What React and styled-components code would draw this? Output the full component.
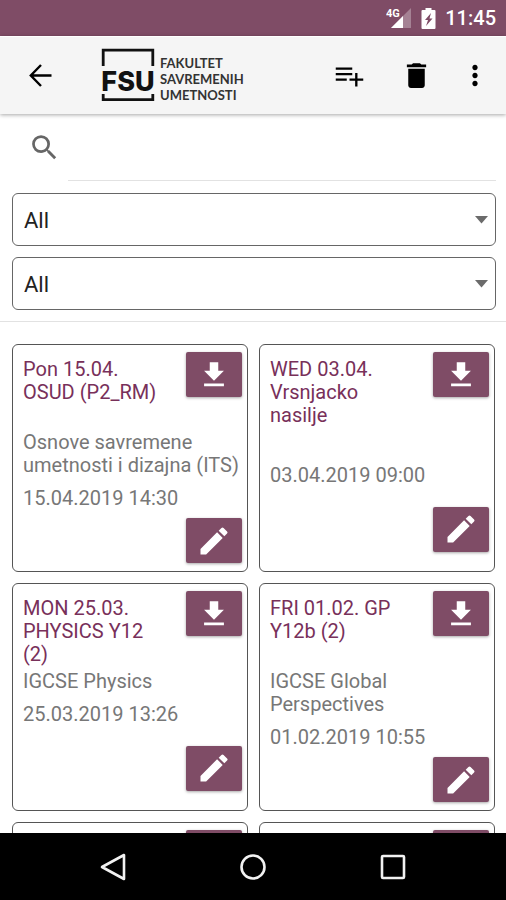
import React, { useState } from "react";
import styled, { createGlobalStyle } from "styled-components";
import { MdDelete, MdEdit, MdGetApp, MdMoreVert, MdSearch } from "react-icons/md";

const GlobalStyle = createGlobalStyle`
  * {
    box-sizing: border-box;
  }

  body {
    margin: 0;
    background: #fff;
    font-family: Roboto, sans-serif;
  }

  button, input, select {
    font-family: inherit;
  }
`;

const Screen = styled.div`
  display: flex;
  flex-direction: column;
  height: 100vh;
  overflow: hidden;
`;

const StatusBar = styled.div`
  flex: none;
  display: flex;
  justify-content: flex-end;
  align-items: center;
  gap: 9px;
  height: 36px;
  padding-right: 10px;
  background: #7f4c66;
  color: #fff;
`;

const Clock = styled.span`
  font-size: 20px;
  font-weight: 500;
  line-height: 24px;
`;

const Toolbar = styled.header`
  flex: none;
  display: flex;
  align-items: center;
  height: 78px;
  padding: 0 15px 0 16px;
  background: #f5f5f5;
  box-shadow: inset 0 1px 0 #fff, 0 1px 4px rgba(0, 0, 0, 0.35);
`;

const IconButton = styled.button`
  display: flex;
  align-items: center;
  justify-content: center;
  width: ${props => (props.$narrow ? "32px" : "48px")};
  height: 48px;
  padding: 0;
  border: none;
  background: none;
  color: #000;
  cursor: pointer;
`;

const Logo = styled.div`
  display: flex;
  align-items: center;
  gap: 5px;
  margin-left: 37px;
`;

const LogoName = styled.div`
  padding-top: 8px;
  color: #333;
  font-family: Lato, sans-serif;
  font-size: 13px;
  font-weight: 700;
  line-height: 16px;
`;

const Actions = styled.div`
  display: flex;
  gap: 19px;
  margin-left: auto;
`;

const SearchRow = styled.div`
  flex: none;
  display: flex;
  align-items: center;
  height: 67px;
  padding: 0 10px 0 28px;
  color: #666;
`;

const SearchInput = styled.input`
  flex: 1;
  min-width: 0;
  height: 67px;
  margin-left: 7px;
  border: none;
  border-bottom: 1px solid #e2e2e2;
  outline: none;
  background: none;
  font-size: 22px;
`;

const Filters = styled.div`
  flex: none;
  display: flex;
  flex-direction: column;
  gap: 11px;
  padding: 12px 10px 11px 12px;
  border-bottom: 1px solid #e2e2e2;
`;

const SelectBox = styled.div`
  display: grid;
  align-items: center;
  height: 53px;
  border: 1px solid #666;
  border-radius: 6px;

  > * {
    grid-area: 1 / 1;
  }

  svg {
    justify-self: end;
    margin-right: 7px;
    pointer-events: none;
  }
`;

const Select = styled.select`
  appearance: none;
  width: 100%;
  height: 51px;
  padding: 2px 30px 0 11px;
  border: none;
  outline: none;
  background: none;
  color: #222;
  font-size: 22px;
`;

const List = styled.main`
  flex: 1;
  min-height: 0;
  overflow: hidden;
  display: grid;
  grid-template-columns: 1fr 1fr;
  grid-auto-rows: min-content;
  gap: 11px;
  padding: 22px 11px 0 12px;
`;

const Card = styled.article`
  display: flex;
  flex-direction: column;
  min-height: 228px;
  padding: 7px 5px 0 10px;
  border: 1px solid #555;
  border-radius: 6px;
  font-size: 20px;
  line-height: 23px;
  color: #777;
`;

const CardHead = styled.div`
  display: flex;
  align-items: flex-start;
  justify-content: space-between;
  gap: 24px;
`;

const Title = styled.h2`
  flex: 1;
  min-width: 0;
  min-height: 69px;
  margin: 6px 0 4px;
  color: #78305a;
  font-size: 20px;
  font-weight: 400;
  line-height: 23px;
`;

const Subject = styled.div`
  min-height: 23px;
`;

const Time = styled.div`
  min-height: 23px;
  margin-top: 10px;
`;

const CardFoot = styled.div`
  flex: 1;
  display: flex;
  align-items: center;
  justify-content: flex-end;
`;

const CardButton = styled.button`
  flex: none;
  display: flex;
  align-items: center;
  justify-content: center;
  width: 56px;
  height: 45px;
  padding: 0;
  border: none;
  border-radius: 2px;
  background: #7f4c66;
  color: #fff;
  box-shadow: 0 1px 3px rgba(0, 0, 0, 0.35);
  cursor: pointer;
`;

const NavBar = styled.nav`
  flex: none;
  display: flex;
  align-items: center;
  justify-content: space-around;
  height: 67px;
  padding: 0 43px;
  background: #000;
`;

const NavButton = styled(IconButton)`
  color: #f2f2f2;
`;

const items = [
  { title: "Pon 15.04. OSUD (P2_RM)", subject: "Osnove savremene umetnosti i dizajna (ITS)", time: "15.04.2019 14:30" },
  { title: "WED 03.04. Vrsnjacko nasilje", subject: "", time: "03.04.2019 09:00" },
  { title: "MON 25.03. PHYSICS Y12 (2)", subject: "IGCSE Physics", time: "25.03.2019 13:26" },
  { title: "FRI 01.02. GP Y12b (2)", subject: "IGCSE Global Perspectives", time: "01.02.2019 10:55" },
  { title: "", subject: "", time: "" },
  { title: "", subject: "", time: "" },
];

const SignalIcon = () => (
  <svg width="26" height="22" viewBox="0 0 26 22">
    <path d="M25 1v20H5z" fill="#fff" opacity="0.3" />
    <path d="M17 9v12H5z" fill="#fff" />
    <text x="0" y="10" fill="#fff" fontFamily="Roboto, sans-serif" fontSize="11" fontWeight="700">4G</text>
  </svg>
);

const BatteryIcon = () => (
  <svg width="15" height="21" viewBox="0 0 15 21">
    <path
      fillRule="evenodd"
      d="M4.500 0h6v2H13.500a1 1 0 0 1 1 1v17a1 1 0 0 1-1 1h-12a1 1 0 0 1-1-1V3a1 1 0 0 1 1-1h3zM10 5L4 12h3l-2 6L11.500 10.500h-3z"
      fill="#fff"
    />
  </svg>
);

const ArrowBackIcon = () => (
  <svg width="33" height="33" viewBox="0 0 33 33" fill="none" stroke="#000" strokeWidth="2.4">
    <path d="M27.500 16.500H7M17 6L6.800 16.500 17 27" />
  </svg>
);

const PlaylistAddIcon = () => (
  <svg width="33" height="33" viewBox="0 0 24 24">
    <path d="M14 10.200H2v1.700h12zM14 6.200H2v1.700h12zM17.800 14.200V10.200h-1.700v4H12v1.700h4.100V20h1.700v-4.100H22v-1.700zM2 15.900h8v-1.700H2z" />
  </svg>
);

const LogoMark = () => (
  <svg width="54" height="54" viewBox="0 0 54 54">
    <path d="M2.200 18V2.200h49.600V18M2.200 46v5.600h49.600V46" fill="none" stroke="#111" strokeWidth="2.800" />
    <text x="27" y="43" textAnchor="middle" fill="#111" fontFamily="Inter, sans-serif" fontSize="27" fontWeight="800">FSU</text>
  </svg>
);

const Filter = ({ label }) => {
  const [value, setValue] = useState("All");
  return (
    <SelectBox>
      <Select aria-label={label} value={value} onChange={e => setValue(e.target.value)}>
        <option>All</option>
      </Select>
      <svg width="13" height="8" viewBox="0 0 13 8">
        <path d="M0 0h13L6.500 7.500z" fill="#6b6b6b" />
      </svg>
    </SelectBox>
  );
};

const App = () => {
  const [query, setQuery] = useState("");
  return (
    <>
      <GlobalStyle />
      <Screen>
        <StatusBar>
          <SignalIcon />
          <BatteryIcon />
          <Clock>11:45</Clock>
        </StatusBar>

        <Toolbar>
          <IconButton aria-label="Back"><ArrowBackIcon /></IconButton>
          <Logo>
            <LogoMark />
            <LogoName>
              <div>FAKULTET</div>
              <div>SAVREMENIH</div>
              <div>UMETNOSTI</div>
            </LogoName>
          </Logo>
          <Actions>
            <IconButton aria-label="Add to list"><PlaylistAddIcon /></IconButton>
            <IconButton aria-label="Delete"><MdDelete size={33} /></IconButton>
            <IconButton aria-label="More" $narrow><MdMoreVert size={33} /></IconButton>
          </Actions>
        </Toolbar>

        <SearchRow>
          <MdSearch size={33} />
          <SearchInput type="search" aria-label="Search" value={query} onChange={e => setQuery(e.target.value)} />
        </SearchRow>

        <Filters>
          <Filter label="Subject" />
          <Filter label="Group" />
        </Filters>

        <List>
          {items.map((item, i) => (
            <Card key={i}>
              <CardHead>
                <Title>{item.title}</Title>
                <CardButton aria-label="Download"><MdGetApp size={34} /></CardButton>
              </CardHead>
              <Subject>{item.subject}</Subject>
              <Time>{item.time}</Time>
              <CardFoot>
                <CardButton aria-label="Edit"><MdEdit size={36} /></CardButton>
              </CardFoot>
            </Card>
          ))}
        </List>

        <NavBar>
          <NavButton aria-label="Back">
            <svg width="28" height="30" viewBox="0 0 28 30" fill="none" stroke="currentColor" strokeWidth="2.600" strokeLinejoin="round">
              <path d="M25 3v24L3 15z" />
            </svg>
          </NavButton>
          <NavButton aria-label="Home">
            <svg width="28" height="28" viewBox="0 0 28 28" fill="none" stroke="currentColor" strokeWidth="2.600">
              <circle cx="14" cy="14" r="11.500" />
            </svg>
          </NavButton>
          <NavButton aria-label="Recent apps">
            <svg width="28" height="28" viewBox="0 0 28 28" fill="none" stroke="currentColor" strokeWidth="2.600">
              <rect x="3" y="3" width="22" height="22" rx="1" />
            </svg>
          </NavButton>
        </NavBar>
      </Screen>
    </>
  );
};

export default App;
